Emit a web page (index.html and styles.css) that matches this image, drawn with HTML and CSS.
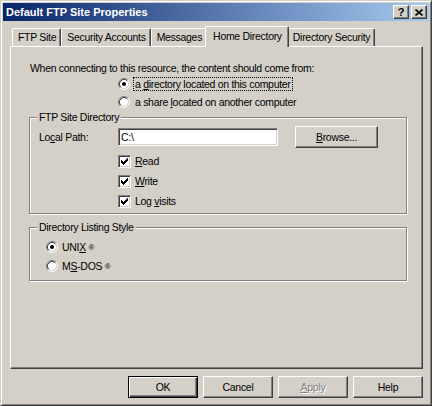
FILE: index.html
```html
<!DOCTYPE html>
<html>
<head>
<meta charset="utf-8">
<link rel="stylesheet" href="styles.css">
</head>
<body>
<div class="window">
  <div class="titlebar">
    <span class="title">Default FTP Site Properties</span>
    <div class="caption-btns">
      <span class="cbtn help">?</span>
      <span class="cbtn close"><svg width="8" height="7" viewBox="0 0 8 7"><path d="M0.5 0.5 L7.5 6.5 M7.5 0.5 L0.5 6.5" stroke="#000" stroke-width="1.6"/></svg></span>
    </div>
  </div>
  <div class="tabs">
    <div class="tab">FTP Site</div>
    <div class="tab">Security Accounts</div>
    <div class="tab">Messages</div>
    <div class="tab active">Home Directory</div>
    <div class="tab">Directory Security</div>
  </div>
  <div class="panel">
    <p class="intro">When connecting to this resource, the content should come from:</p>
    <div class="choices">
      <label class="opt">
        <svg class="radio" width="12" height="12" viewBox="0 0 12 12"><path d="M2.11 9.89 A5.5 5.5 0 0 1 9.89 2.11" fill="none" stroke="#808080"/><path d="M9.89 2.11 A5.5 5.5 0 0 1 2.11 9.89" fill="none" stroke="#fff"/><circle cx="6" cy="6" r="4.2" fill="#fff"/><path d="M2.82 9.18 A4.5 4.5 0 0 1 9.18 2.82" fill="none" stroke="#404040"/><path d="M9.18 2.82 A4.5 4.5 0 0 1 2.82 9.18" fill="none" stroke="#d4d0c8"/><circle cx="6" cy="6" r="2" fill="#000"/></svg>
        <span class="focus">a <u>d</u>irectory located on this computer</span>
      </label>
      <label class="opt">
        <svg class="radio" width="12" height="12" viewBox="0 0 12 12"><path d="M2.11 9.89 A5.5 5.5 0 0 1 9.89 2.11" fill="none" stroke="#808080"/><path d="M9.89 2.11 A5.5 5.5 0 0 1 2.11 9.89" fill="none" stroke="#fff"/><circle cx="6" cy="6" r="4.2" fill="#fff"/><path d="M2.82 9.18 A4.5 4.5 0 0 1 9.18 2.82" fill="none" stroke="#404040"/><path d="M9.18 2.82 A4.5 4.5 0 0 1 2.82 9.18" fill="none" stroke="#d4d0c8"/></svg>
        <span class="txt">a share <u>l</u>ocated on another computer</span>
      </label>
    </div>
    <fieldset class="group g1">
      <legend>FTP Site Directory</legend>
      <div class="path-row">
        <span class="lbl">Lo<u>c</u>al Path:</span>
        <div class="input">C:\</div>
        <button class="btn browse"><u>B</u>rowse...</button>
      </div>
      <div class="checks">
        <div class="chk"><span class="box"><svg width="7" height="7" viewBox="0 0 7 7"><path d="M6 0h1v1h-1z M5 1h2v1h-2z M0 2h1v1h-1z M4 2h3v1h-3z M0 3h2v1h-2z M3 3h3v1h-3z M0 4h5v1h-5z M1 5h3v1h-3z M2 6h1v1h-1z" fill="#000"/></svg></span><span><u>R</u>ead</span></div>
        <div class="chk"><span class="box"><svg width="7" height="7" viewBox="0 0 7 7"><path d="M6 0h1v1h-1z M5 1h2v1h-2z M0 2h1v1h-1z M4 2h3v1h-3z M0 3h2v1h-2z M3 3h3v1h-3z M0 4h5v1h-5z M1 5h3v1h-3z M2 6h1v1h-1z" fill="#000"/></svg></span><span><u>W</u>rite</span></div>
        <div class="chk"><span class="box"><svg width="7" height="7" viewBox="0 0 7 7"><path d="M6 0h1v1h-1z M5 1h2v1h-2z M0 2h1v1h-1z M4 2h3v1h-3z M0 3h2v1h-2z M3 3h3v1h-3z M0 4h5v1h-5z M1 5h3v1h-3z M2 6h1v1h-1z" fill="#000"/></svg></span><span>Log <u>v</u>isits</span></div>
      </div>
    </fieldset>
    <fieldset class="group g2">
      <legend>Directory Listing Style</legend>
      <div class="styles">
        <label class="opt2">
          <svg class="radio" width="12" height="12" viewBox="0 0 12 12"><path d="M2.11 9.89 A5.5 5.5 0 0 1 9.89 2.11" fill="none" stroke="#808080"/><path d="M9.89 2.11 A5.5 5.5 0 0 1 2.11 9.89" fill="none" stroke="#fff"/><circle cx="6" cy="6" r="4.2" fill="#fff"/><path d="M2.82 9.18 A4.5 4.5 0 0 1 9.18 2.82" fill="none" stroke="#404040"/><path d="M9.18 2.82 A4.5 4.5 0 0 1 2.82 9.18" fill="none" stroke="#d4d0c8"/><circle cx="6" cy="6" r="2" fill="#000"/></svg>
          <span>UNI<u>X</u> <span class="reg">®</span></span>
        </label>
        <label class="opt2">
          <svg class="radio" width="12" height="12" viewBox="0 0 12 12"><path d="M2.11 9.89 A5.5 5.5 0 0 1 9.89 2.11" fill="none" stroke="#808080"/><path d="M9.89 2.11 A5.5 5.5 0 0 1 2.11 9.89" fill="none" stroke="#fff"/><circle cx="6" cy="6" r="4.2" fill="#fff"/><path d="M2.82 9.18 A4.5 4.5 0 0 1 9.18 2.82" fill="none" stroke="#404040"/><path d="M9.18 2.82 A4.5 4.5 0 0 1 2.82 9.18" fill="none" stroke="#d4d0c8"/></svg>
          <span>M<u>S</u>-DOS <span class="reg">®</span></span>
        </label>
      </div>
    </fieldset>
  </div>
  <div class="buttons">
    <button class="btn dlg default">OK</button>
    <button class="btn dlg">Cancel</button>
    <button class="btn dlg disabled"><u>A</u>pply</button>
    <button class="btn dlg">Help</button>
  </div>
</div>
</body>
</html>
```

FILE: styles.css
```css
html, body {
  margin: 0;
  padding: 0;
  background: #d4d0c8;
}

body {
  font-family: "Liberation Sans", Arial, sans-serif;
  font-size: 10.5px;
  letter-spacing: -0.3px;
  color: #000;
}

.window {
  width: 432px;
  height: 406px;
  box-sizing: border-box;
  background: #d4d0c8;
  border: 1px solid;
  border-color: #d4d0c8 #404040 #404040 #d4d0c8;
  box-shadow: inset 1px 1px 0 #fff, inset -1px -1px 0 #808080;
  padding: 2px;
}

.titlebar {
  height: 18px;
  display: flex;
  align-items: center;
  justify-content: space-between;
  padding: 0 2px 0 3px;
  background: linear-gradient(to right, #0a246a, #a6caf0);
  color: #fff;
}

.title {
  font-weight: bold;
  font-size: 11px;
  letter-spacing: 0;
}

.caption-btns {
  display: flex;
  gap: 2px;
}

.cbtn {
  width: 16px;
  height: 14px;
  box-sizing: border-box;
  background: #d4d0c8;
  border: 1px solid;
  border-color: #fff #404040 #404040 #fff;
  box-shadow: inset -1px -1px 0 #808080;
  display: flex;
  align-items: center;
  justify-content: center;
  color: #000;
  font-weight: bold;
  font-size: 11px;
  letter-spacing: 0;
  line-height: 1;
}

.tabs {
  display: flex;
  align-items: flex-end;
  height: 21px;
  margin: 5px 6px -1px 9px;
  position: relative;
  z-index: 1;
}

.tab {
  height: 18px;
  box-sizing: border-box;
  margin-bottom: 1px;
  padding: 0 4px 1px 5px;
  display: flex;
  align-items: center;
  border-top: 1px solid #fff;
  border-left: 1px solid #fff;
  border-right: 1px solid #404040;
  box-shadow: inset -1px 0 0 #808080;
  border-radius: 2px 2px 0 0;
  background: #d4d0c8;
  white-space: nowrap;
}

.tab.active {
  height: 21px;
  margin: 0 -2px;
  padding: 0 6px 3px 7px;
  position: relative;
  z-index: 2;
}

.panel {
  height: 323px;
  box-sizing: border-box;
  margin: 0 6px 0 7px;
  border: 1px solid;
  border-color: #fff #404040 #404040 #fff;
  box-shadow: inset -1px -1px 0 #808080;
  padding: 15px 15px 0 18px;
}

.intro {
  margin: 0;
  padding-left: 1px;
  line-height: 13px;
}

.opt {
  display: flex;
  align-items: center;
  height: 18px;
  margin-left: 89px;
  gap: 3px;
}

.radio {
  display: block;
  flex: none;
}

.focus {
  border: 1px dotted #000;
  padding: 0 1px;
  line-height: 12px;
}

.txt {
  padding-left: 2px;
}

.group {
  margin: 0;
  padding: 0 9px;
  min-width: 0;
  border: 1px solid #808080;
  box-shadow: 1px 1px 0 #fff, inset 1px 1px 0 #fff;
}

.group legend {
  margin-left: -2px;
  padding: 0 2px;
  line-height: 13px;
  background: #d4d0c8;
}

.path-row {
  display: flex;
  align-items: center;
  height: 22px;
  margin-top: 2px;
}

.lbl {
  width: 79px;
  flex: none;
}

.input {
  width: 160px;
  height: 18px;
  box-sizing: border-box;
  border: 1px solid;
  border-color: #808080 #fff #fff #808080;
  box-shadow: inset 1px 1px 0 #404040, inset -1px -1px 0 #d4d0c8;
  background: #fff;
  padding-left: 2px;
  line-height: 16px;
}

.btn {
  box-sizing: border-box;
  height: 22px;
  padding: 0;
  margin: 0;
  font: inherit;
  letter-spacing: inherit;
  color: #000;
  background: #d4d0c8;
  border: 1px solid;
  border-color: #fff #404040 #404040 #fff;
  box-shadow: inset -1px -1px 0 #808080;
  border-radius: 0;
}

.browse {
  width: 83px;
  margin-left: 17px;
}

.checks {
  margin-top: 3px;
  padding-bottom: 2px;
}

.chk {
  display: flex;
  align-items: center;
  height: 20px;
  margin-left: 79px;
  gap: 4px;
}

.box {
  width: 13px;
  height: 13px;
  box-sizing: border-box;
  border: 1px solid;
  border-color: #808080 #fff #fff #808080;
  box-shadow: inset 1px 1px 0 #404040, inset -1px -1px 0 #d4d0c8;
  background: #fff;
  display: flex;
  align-items: center;
  justify-content: center;
  flex: none;
}

.box svg {
  display: block;
}

.g2 {
  margin-top: 7px;
}

.styles {
  margin: 3px 0 0 7px;
  padding-bottom: 5px;
}

.opt2 {
  display: flex;
  align-items: center;
  height: 19px;
  gap: 4px;
}

.reg {
  font-size: 8px;
  letter-spacing: 0;
  vertical-align: 1px;
}

.buttons {
  display: flex;
  justify-content: flex-end;
  gap: 5px;
  margin: 7px 6px 0 0;
}

.dlg {
  width: 70px;
}

.default {
  border: 1px solid #000;
  box-shadow: inset 1px 1px 0 #fff, inset -1px -1px 0 #404040, inset -2px -2px 0 #808080;
}

.disabled {
  color: #808080;
  text-shadow: 1px 1px 0 #fff;
}
```
